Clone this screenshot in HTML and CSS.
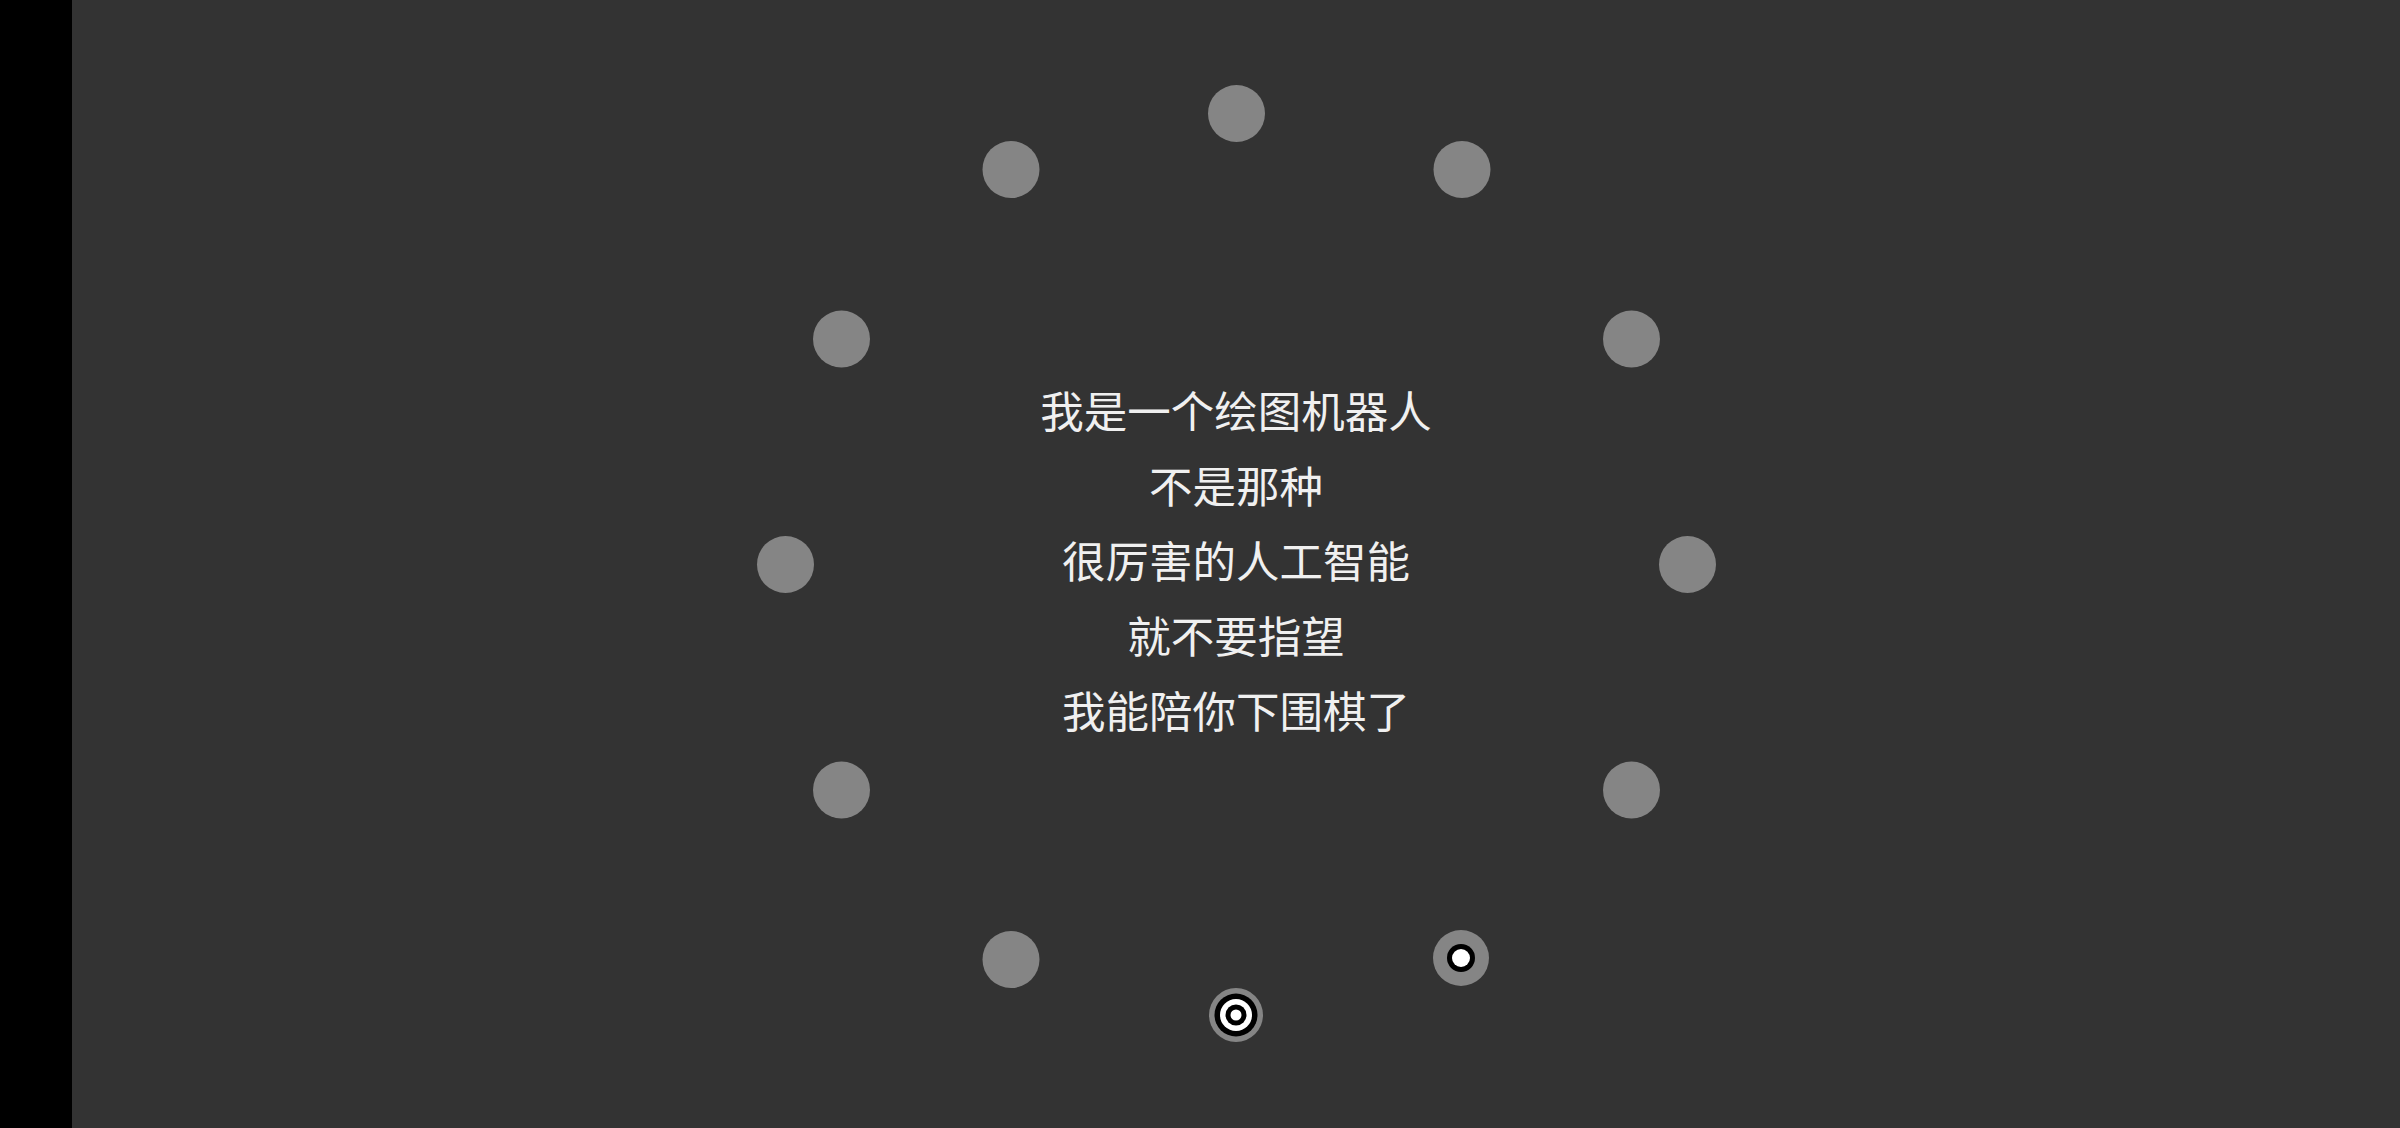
FILE: index.html
```html
<!DOCTYPE html>
<html lang="zh">
<head>
<meta charset="utf-8">
<title>绘图机器人</title>
<link rel="stylesheet" href="styles.css">
</head>
<body>
<div class="app">
  <div class="side"></div>
  <main class="stage">
    <div class="ring">
      <div class="dot a0"></div>
      <div class="dot a30"></div>
      <div class="dot a60"></div>
      <div class="dot a90"></div>
      <div class="dot a120"></div>
      <div class="dot a150 marked">
        <svg viewBox="0 0 56 56" width="56" height="56"><circle cx="28" cy="28" r="28" fill="#858585"/><circle cx="28" cy="28" r="14" fill="#000"/><circle cx="28" cy="28" r="9" fill="#fff"/></svg>
      </div>
      <div class="dot a180 target">
        <svg viewBox="0 0 56 56" width="56" height="56"><circle cx="28" cy="28" r="27" fill="#858585"/><circle cx="28" cy="28" r="21.5" fill="#000"/><circle cx="28" cy="28" r="16" fill="#fff"/><circle cx="28" cy="28" r="10.5" fill="#000"/><circle cx="28" cy="28" r="5.5" fill="#fff"/></svg>
      </div>
      <div class="dot a210"></div>
      <div class="dot a240"></div>
      <div class="dot a270"></div>
      <div class="dot a300"></div>
      <div class="dot a330"></div>
    </div>
    <div class="message">
      <p>我是一个绘图机器人</p>
      <p>不是那种</p>
      <p>很厉害的人工智能</p>
      <p>就不要指望</p>
      <p>我能陪你下围棋了</p>
    </div>
  </main>
</div>
</body>
</html>
```
FILE: styles.css
```css
html, body {
  margin: 0;
  padding: 0;
  width: 100%;
  height: 100%;
  background: #333333;
  overflow: hidden;
}
.app {
  display: flex;
  width: 100%;
  height: 100%;
}
.side {
  width: 72px;
  flex: none;
  background: #000;
}
.stage {
  position: relative;
  flex: 1;
  display: flex;
  align-items: center;
  justify-content: center;
  background: #333333;
}
.ring {
  position: absolute;
  left: 50%;
  top: 50%;
  width: 0;
  height: 0;
}
.dot {
  position: absolute;
  left: -28.5px;
  top: -28.5px;
  width: 57px;
  height: 57px;
  border-radius: 50%;
  background: #858585;
}
.dot svg {
  display: block;
  margin: 0.5px;
}
.marked, .target {
  background: transparent;
}
.a0   { transform: translate(0px, -451px); }
.a30  { transform: translate(225.5px, -395px); }
.a60  { transform: translate(395px, -225.5px); }
.a90  { transform: translate(451px, 0px); }
.a120 { transform: translate(395px, 225.5px); }
.a150 { transform: translate(225px, 394px); }
.a180 { transform: translate(0px, 451px); }
.a210 { transform: translate(-225.5px, 395px); }
.a240 { transform: translate(-395px, 225.5px); }
.a270 { transform: translate(-451px, 0px); }
.a300 { transform: translate(-395px, -225.5px); }
.a330 { transform: translate(-225.5px, -395px); }
.message {
  position: relative;
  padding-bottom: 9px;
  text-align: center;
  font-family: "Noto Sans CJK SC", "Noto Sans", sans-serif;
  font-size: 43.5px;
  line-height: 75px;
  color: #f0f0f0;
}
.message p {
  margin: 0;
}
```
